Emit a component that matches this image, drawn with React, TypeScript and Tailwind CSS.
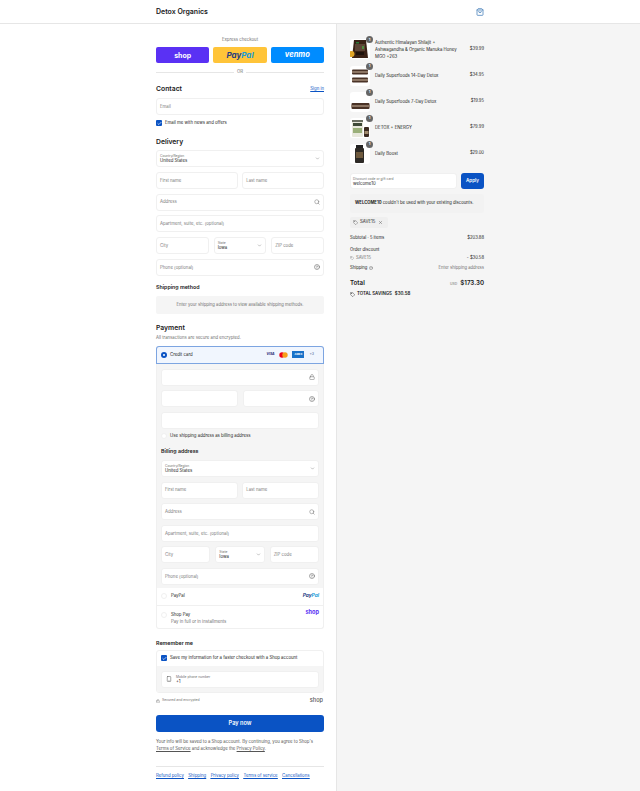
import React from "react";
import { ChevronDown, CircleHelp, Lock, Search, ShoppingBag, Smartphone, Tag, X, Check } from "lucide-react";

function Field({ label, value, icon, select, className = "" }: { label: string; value?: string; icon?: React.ReactNode; select?: boolean; className?: string }) {
  return (
    <div className={`flex h-[17px] min-w-0 items-center justify-between rounded-[3px] border border-[#f0f0f0] bg-white px-[3px] ${className}`}>
      {value ? (
        <div className="flex flex-col leading-none">
          <span className="text-[3.3px] leading-[4px] text-[#707070]">{label}</span>
          <span className="text-[4.3px] leading-[5px] text-[#1a1a1a]">{value}</span>
        </div>
      ) : (
        <span className="mt-[1px] text-[4.3px] text-[#7a7a7a]">{label}</span>
      )}
      {select && <ChevronDown className="h-[5px] w-[5px] text-[#707070]" />}
      {icon}
    </div>
  );
}

function AddressFields({ gapClass }: { gapClass: string }) {
  const search = <Search className="h-[6px] w-[6px] text-[#707070]" />;
  const help = <CircleHelp className="h-[6px] w-[6px] text-[#555555]" />;
  return (
    <div className={`flex flex-col ${gapClass}`}>
      <Field label="Country/Region" value="United States" select />
      <div className="grid grid-cols-2 gap-[4.5px]">
        <Field label="First name" />
        <Field label="Last name" />
      </div>
      <Field label="Address" icon={search} />
      <Field label="Apartment, suite, etc. (optional)" />
      <div className="grid grid-cols-3 gap-[5px]">
        <Field label="City" />
        <Field label="State" value="Iowa" select />
        <Field label="ZIP code" />
      </div>
      <Field label="Phone (optional)" icon={help} />
    </div>
  );
}

function Radio({ on }: { on?: boolean }) {
  return on ? (
    <span className="flex h-[6px] w-[6px] shrink-0 items-center justify-center rounded-full bg-[#0a53c4]">
      <span className="h-[2.5px] w-[2.5px] rounded-full bg-white" />
    </span>
  ) : (
    <span className="h-[6px] w-[6px] shrink-0 rounded-full border border-[#f0f0f0] bg-white" />
  );
}

function Box() {
  return (
    <span className="flex h-[6px] w-[6px] shrink-0 items-center justify-center rounded-[1px] bg-[#0a53c4]">
      <Check className="h-[5px] w-[5px] text-white" strokeWidth={3} />
    </span>
  );
}

function Thumb({ kind }: { kind: number }) {
  return (
    <div className="relative h-[20px] w-[20px] shrink-0 rounded-[3px] bg-white">
      <svg viewBox="0 0 20 20" className="h-[20px] w-[20px]">
        {kind === 0 && (
          <>
            <path d="M4 1h12l2 18H2z" fill="#3a2216" />
            <rect x="5" y="5" width="10" height="7" fill="#5d4536" />
            <rect x="6" y="3" width="3" height="1.5" fill="#2c7a3a" />
            <rect x="12" y="7" width="2" height="3" fill="#4d8a3f" />
            <rect x="6" y="13" width="8" height="3" fill="#1f130c" />
            <circle cx="1.5" cy="15" r="3" fill="#e0a526" />
          </>
        )}
        {kind === 1 && (
          <>
            <rect x="2" y="3.5" width="16" height="5" rx="1" fill="#4a3327" />
            <rect x="2" y="5" width="16" height="2" fill="#8c7563" />
            <rect x="2" y="11.5" width="16" height="5" rx="1" fill="#4a3327" />
            <rect x="2" y="13" width="16" height="2" fill="#8c7563" />
          </>
        )}
        {kind === 2 && (
          <>
            <rect x="1.5" y="11" width="18" height="6" rx="1" fill="#4a3327" />
            <rect x="1.5" y="13" width="18" height="2" fill="#8c7563" />
          </>
        )}
        {kind === 3 && (
          <>
            <rect x="2" y="2" width="11" height="17" rx="1" fill="#e8e8dc" />
            <rect x="2" y="2" width="11" height="2" fill="#6b6f62" />
            <rect x="3" y="5" width="9" height="3" fill="#3f4a38" />
            <rect x="3" y="10" width="9" height="5" fill="#9bb07a" />
            <rect x="14" y="9" width="5" height="10" rx="1" fill="#3b2a20" />
            <rect x="14.5" y="13" width="4" height="3" fill="#a08a6d" />
          </>
        )}
        {kind === 4 && (
          <>
            <rect x="6" y="1" width="7" height="3" fill="#222222" />
            <rect x="5" y="4" width="9" height="15" rx="1" fill="#2d2a26" />
            <rect x="6" y="8" width="7" height="6" fill="#6f5a3e" />
          </>
        )}
      </svg>
      <span className="absolute right-[-3px] top-[-3px] flex h-[7px] w-[7px] items-center justify-center rounded-full bg-[#666666] text-[4px] font-semibold leading-none text-white">1</span>
    </div>
  );
}

const items = [
  { name: "Authentic Himalayan Shilajit + Ashwagandha & Organic Manuka Honey MGO +263", price: "$39.99" },
  { name: "Daily Superfoods 14-Day Detox", price: "$34.95" },
  { name: "Daily Superfoods 7-Day Detox", price: "$19.95" },
  { name: "DETOX + ENERGY", price: "$79.99" },
  { name: "Daily Boost", price: "$29.00" },
];

export default function App() {
  return (
    <div className="flex min-h-[791px] flex-col overflow-hidden bg-white text-[#1a1a1a] [font-family:Inter,'Liberation_Sans',sans-serif]">
      <header className="flex h-[24px] shrink-0 items-center justify-between border-b border-[#e6e6e6] pl-[156px] pr-[156px]">
        <span className="text-[7px] font-semibold leading-none">Detox Organics</span>
        <ShoppingBag className="h-[8px] w-[8px] text-[#2a6db0]" />
      </header>
      <div className="flex flex-1">
        {/* left column */}
        <main className="w-[336px] shrink-0 pl-[156px] pr-[12px] pt-[13px]">
          <p className="h-[10px] text-center text-[4.3px] leading-[5px] text-[#707070]">Express checkout</p>
          <div className="grid grid-cols-3 gap-[4px]">
            <div className="flex h-[16px] items-center justify-center rounded-[2px] bg-[#5a31f4] text-[7px] font-bold leading-none text-white">shop</div>
            <div className="flex h-[16px] items-center justify-center rounded-[2px] bg-[#ffc439] text-[8px] font-bold italic leading-none text-[#253b80]">Pay<span className="text-[#179bd7]">Pal</span></div>
            <div className="flex h-[16px] items-center justify-center rounded-[2px] bg-[#008cff] text-[7.5px] font-bold italic leading-none text-white">venmo</div>
          </div>
          <div className="mt-[6px] flex h-[6px] items-center gap-[3px]">
            <span className="h-px flex-1 bg-[#e6e6e6]" />
            <span className="text-[4.3px] leading-none text-[#707070]">OR</span>
            <span className="h-px flex-1 bg-[#e6e6e6]" />
          </div>

          <div className="mt-[9px] flex h-[10px] items-center justify-between">
            <h2 className="text-[6.8px] font-semibold leading-none">Contact</h2>
            <a className="text-[4.3px] leading-none text-[#0a53c4] underline">Sign in</a>
          </div>
          <Field label="Email" className="mt-[4px]" />
          <label className="mt-[5px] flex h-[6px] items-center gap-[3px] text-[4.3px]"><Box />Email me with news and offers</label>

          <h2 className="mt-[11px] h-[9px] text-[6.8px] font-semibold leading-[9px]">Delivery</h2>
          <div className="mt-[4px]"><AddressFields gapClass="gap-[4.8px]" /></div>

          <h3 className="mt-[8px] h-[6px] text-[5.3px] font-semibold leading-[6px]">Shipping method</h3>
          <div className="mt-[6px] flex h-[18px] items-center justify-center rounded-[2px] bg-[#f5f5f5] text-[4.2px] text-[#707070]">Enter your shipping address to view available shipping methods.</div>

          <h2 className="mt-[9.5px] h-[9px] text-[6.8px] font-semibold leading-[9px]">Payment</h2>
          <p className="mt-[2px] h-[7px] text-[4.25px] leading-[7px] text-[#707070]">All transactions are secure and encrypted.</p>

          <div className="mt-[4.5px]">
            <div className="flex h-[18px] items-center justify-between rounded-t-[3px] border border-[#0a53c4]/50 bg-[#f1f6fe] pl-[4px] pr-[9px]">
              <span className="flex items-center gap-[3px] text-[4.3px]"><Radio on />Credit card</span>
              <span className="flex items-center gap-[4px]">
                <span className="w-[9px] text-[3.4px] font-bold italic text-[#1a1f71]">VISA</span>
                <svg viewBox="0 0 12 8" className="h-[6px] w-[9px]"><circle cx="4" cy="4" r="3.6" fill="#eb001b" /><circle cx="8" cy="4" r="3.6" fill="#f79e1b" /></svg>
                <span className="flex h-[7px] w-[12px] items-center justify-center bg-[#1a72c9] text-[2.6px] font-bold text-white">AMEX</span>
                <span className="ml-[1px] text-[3.6px] text-[#3a5a8c]">+3</span>
              </span>
            </div>
            <div className="overflow-hidden rounded-b-[3px] border-x border-b border-[#f0f0f0]">
              <div className="bg-[#f5f5f5] px-[4px] pb-[3px] pt-[5px]">
                <div className="flex flex-col gap-[4.5px]">
                  <Field label="" icon={<Lock className="h-[6px] w-[6px] text-[#707070]" />} className="justify-end" />
                  <div className="grid grid-cols-2 gap-[5px]">
                    <Field label="" />
                    <Field label="" icon={<CircleHelp className="h-[6px] w-[6px] text-[#555555]" />} />
                  </div>
                  <Field label="" />
                </div>
                <label className="mt-[4px] flex h-[6px] items-center gap-[3px] text-[4.3px]"><Radio />Use shipping address as billing address</label>
                <h3 className="mt-[9px] h-[6px] text-[5.3px] font-semibold leading-[6px]">Billing address</h3>
                <div className="mt-[6px]"><AddressFields gapClass="gap-[4.6px]" /></div>
              </div>
              <div className="flex h-[18px] items-center justify-between border-b border-[#f0f0f0] px-[4px]">
                <span className="flex items-center gap-[4px] text-[4.3px]"><Radio />PayPal</span>
                <span className="mb-[3px] text-[4.8px] font-bold italic leading-none text-[#253b80]">Pay<span className="text-[#179bd7]">Pal</span></span>
              </div>
              <div className="flex h-[22px] items-start justify-between px-[4px] pt-[4px]">
                <span className="flex gap-[4px] pt-[1px]">
                  <span className="mt-[1px] flex"><Radio /></span>
                  <span className="flex flex-col text-[4.3px] leading-[7px]">Shop Pay<span className="text-[#707070]">Pay in full or in installments</span></span>
                </span>
                <span className="text-[5.6px] font-bold leading-none text-[#5a31f4]">shop</span>
              </div>
            </div>
          </div>

          <h3 className="mt-[11px] h-[6px] text-[5.3px] font-semibold leading-[6px]">Remember me</h3>
          <div className="mt-[4px] overflow-hidden rounded-[3px] border border-[#f0f0f0]">
            <label className="flex h-[15px] items-center gap-[3px] whitespace-nowrap px-[4px] text-[4.3px]"><Box />Save my information for a faster checkout with a Shop account</label>
            <div className="bg-[#f5f5f5] px-[4px] pb-[4px] pt-[5px]">
              <div className="flex h-[17px] items-center gap-[4px] rounded-[3px] border border-[#f0f0f0] bg-white px-[4px]">
                <Smartphone className="h-[6px] w-[6px] text-[#555555]" />
                <span className="flex flex-col leading-none">
                  <span className="text-[3.3px] leading-[4px] text-[#707070]">Mobile phone number</span>
                  <span className="text-[4.3px] leading-[5px]">+1</span>
                </span>
              </div>
            </div>
          </div>
          <div className="mt-[4px] flex h-[8px] items-center justify-between">
            <span className="flex items-center gap-[2px] text-[3.4px] text-[#707070]"><Lock className="h-[4px] w-[4px]" />Secured and encrypted</span>
            <span className="mr-[1px] text-[5.6px] font-medium leading-none text-[#555555]">shop</span>
          </div>

          <button className="mt-[10px] flex h-[17px] w-full items-center justify-center rounded-[3px] bg-[#0a53c4] text-[5.6px] font-semibold text-white">Pay now</button>
          <p className="mt-[6px] text-[4.3px] leading-[7px] text-[#555555]">
            Your info will be saved to a Shop account. By continuing, you agree to Shop's<br /><a className="underline">Terms of Service</a> and acknowledge the <a className="underline">Privacy Policy</a>.
          </p>
          <nav className="mt-[14px] flex h-[19px] items-center gap-[4.5px] whitespace-nowrap border-t border-[#e6e6e6] text-[4.3px] text-[#0a53c4] underline">
            <a>Refund policy</a><a>Shipping</a><a>Privacy policy</a><a>Terms of service</a><a>Cancellations</a>
          </nav>
        </main>

        {/* right column */}
        <aside className="flex-1 border-l border-[#e6e6e6] bg-[#f5f5f5] pl-[13px] pr-[156px] pt-[14.5px]">
          <div className="flex flex-col gap-[6px]">
            {items.map((it, i) => (
              <div key={it.name} className="flex items-center gap-[5px]">
                <Thumb kind={i} />
                <span className="w-[88px] text-[4.3px] leading-[7px]">{it.name}</span>
                <span className="flex-1 text-right text-[4.2px]">{it.price}</span>
              </div>
            ))}
          </div>
          <div className="mt-[9.5px] flex gap-[4px]">
            <div className="flex h-[16px] flex-1 flex-col justify-center rounded-[3px] border border-[#f0f0f0] bg-white px-[2px] leading-none">
              <span className="text-[3.3px] leading-[4px] text-[#707070]">Discount code or gift card</span>
              <span className="text-[4.3px] leading-[5px]">welcome10</span>
            </div>
            <button className="h-[16px] w-[23px] rounded-[3px] bg-[#0a53c4] text-[4.6px] font-semibold text-white">Apply</button>
          </div>
          <div className="mt-[5px] flex h-[19px] items-center whitespace-nowrap rounded-[2px] bg-[#f2f2f2] px-[5px] text-[4.2px]"><span><b>WELCOME10</b> couldn't be used with your existing discounts.</span></div>
          <div className="mt-[4px] flex h-[11px] w-[38px] items-center gap-[2px] rounded-[2px] bg-[#efefef] px-[3px] text-[4.3px]">
            <Tag className="h-[5px] w-[5px] text-[#555555]" />SAVE15<X className="ml-[1px] h-[5px] w-[5px] text-[#555555]" />
          </div>
          <div className="mt-[6px] flex h-[9px] items-center justify-between text-[4.2px]"><span>Subtotal · 5 items</span><span>$203.88</span></div>
          <div className="mt-[3px] h-[7px] text-[4.2px] leading-[7px]">Order discount</div>
          <div className="mt-[1px] flex h-[9px] items-center justify-between text-[4.2px]">
            <span className="flex items-center gap-[2px] text-[#707070]"><Tag className="h-[4px] w-[4px]" />SAVE15</span>
            <span>- $30.58</span>
          </div>
          <div className="mt-[1px] flex h-[9px] items-center justify-between text-[4.2px]">
            <span className="flex items-center gap-[2px]">Shipping <CircleHelp className="h-[4px] w-[4px] text-[#555555]" /></span>
            <span className="text-[#707070]">Enter shipping address</span>
          </div>
          <div className="mt-[5px] flex h-[10px] items-center justify-between">
            <span className="text-[6.2px] font-semibold leading-none">Total</span>
            <span className="flex items-baseline gap-[3px] leading-none"><span className="text-[3.4px] text-[#707070]">USD</span><span className="text-[6.2px] font-semibold">$173.30</span></span>
          </div>
          <div className="mt-[3px] flex h-[7px] items-center gap-[2px] text-[4.4px] font-semibold">
            <Tag className="h-[5px] w-[5px]" />TOTAL SAVINGS<span className="ml-[1px]">$30.58</span>
          </div>
        </aside>
      </div>
    </div>
  );
}
